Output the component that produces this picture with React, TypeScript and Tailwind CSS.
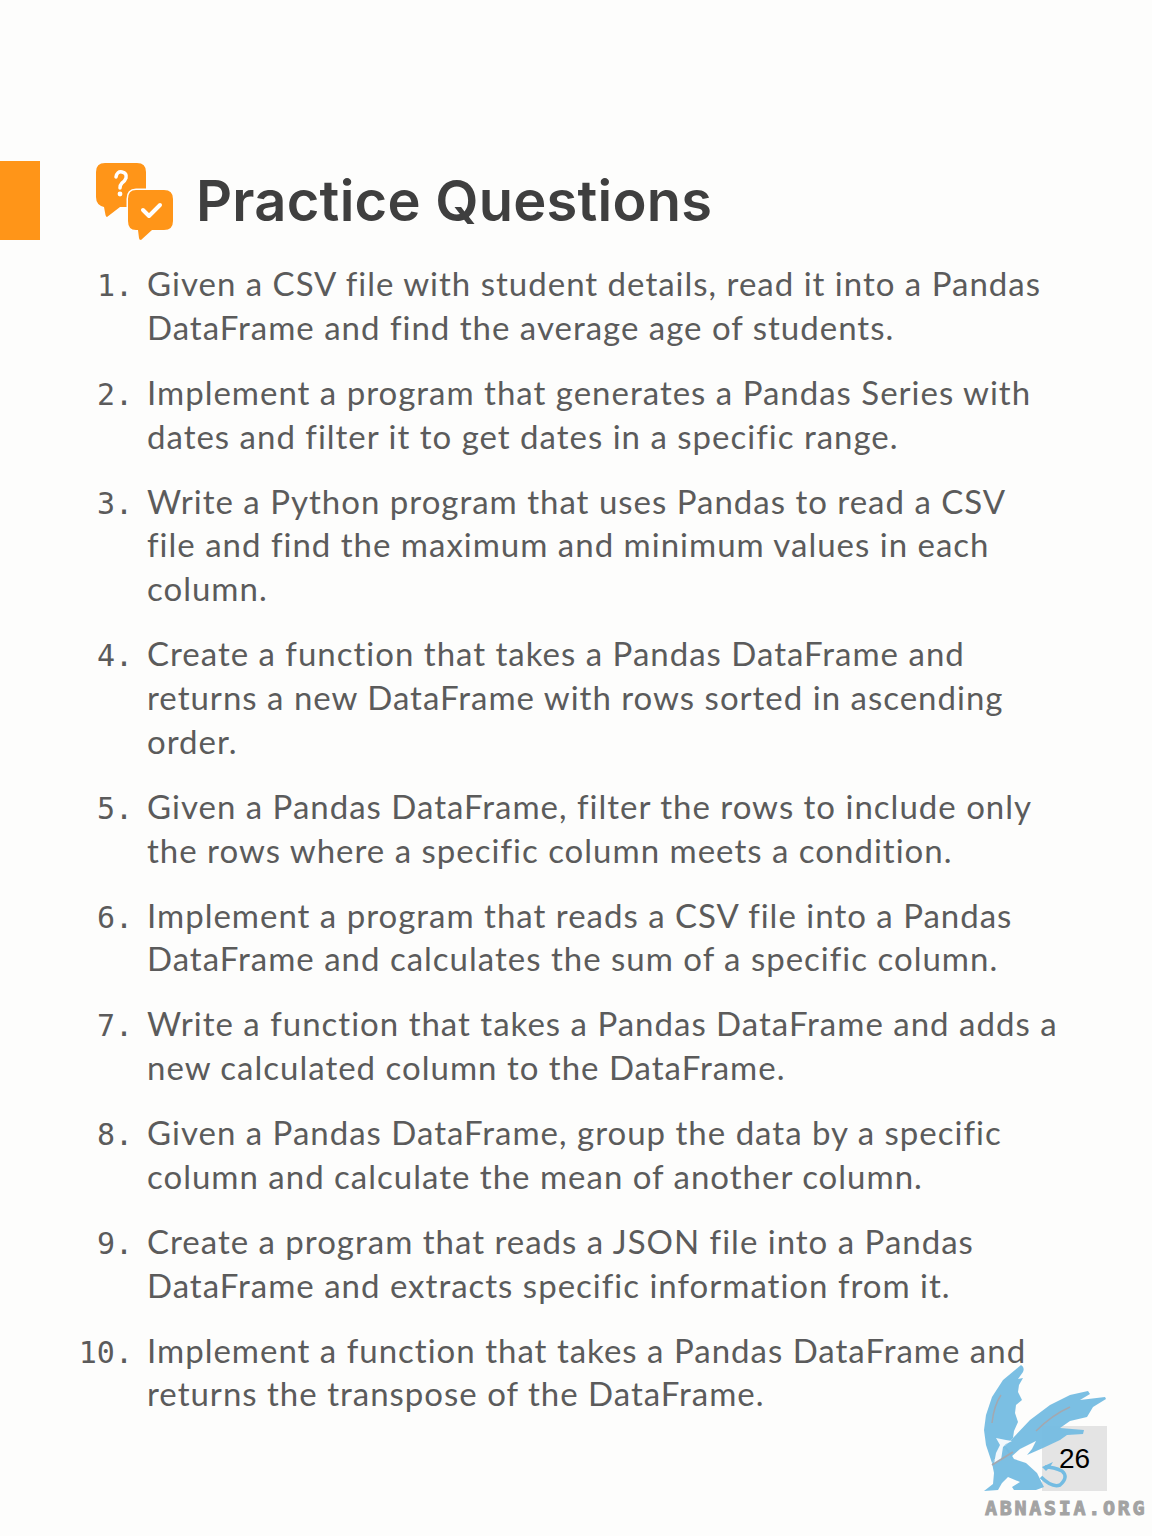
const items: [string, string[]][] = [
  ["1.", ["Given a CSV file with student details, read it into a Pandas", "DataFrame and find the average age of students."]],
  ["2.", ["Implement a program that generates a Pandas Series with", "dates and filter it to get dates in a specific range."]],
  ["3.", ["Write a Python program that uses Pandas to read a CSV", "file and find the maximum and minimum values in each", "column."]],
  ["4.", ["Create a function that takes a Pandas DataFrame and", "returns a new DataFrame with rows sorted in ascending", "order."]],
  ["5.", ["Given a Pandas DataFrame, filter the rows to include only", "the rows where a specific column meets a condition."]],
  ["6.", ["Implement a program that reads a CSV file into a Pandas", "DataFrame and calculates the sum of a specific column."]],
  ["7.", ["Write a function that takes a Pandas DataFrame and adds a", "new calculated column to the DataFrame."]],
  ["8.", ["Given a Pandas DataFrame, group the data by a specific", "column and calculate the mean of another column."]],
  ["9.", ["Create a program that reads a JSON file into a Pandas", "DataFrame and extracts specific information from it."]],
  ["10.", ["Implement a function that takes a Pandas DataFrame and", "returns the transpose of the DataFrame."]],
];

function ChatIcon() {
  return (
    <svg width="78" height="78" viewBox="0 0 78 78" className="shrink-0">
      <path d="M9 0H41Q50 0 50 9V36Q50 44 41 44H24L11 54Q10 54 9.500 52L8 44Q0 42 0 34V9Q0 0 9 0Z" fill="#ff9518" />
      <path d="M40 27H68Q77 27 77 36V58Q77 67 68 67H56L45 77Q43 77 43 75L42 67H40Q32 67 32 58V36Q32 27 40 27Z" fill="#ff9518" stroke="#fdfdfc" strokeWidth="3" paintOrder="stroke" />
      <path d="M20 14Q21 8 26 9Q31 10 30 15Q29 18 26 20Q24 22 24 25" fill="none" stroke="#fff" strokeWidth="3.500" strokeLinecap="round" />
      <circle cx="24" cy="31" r="2.400" fill="#fff" />
      <path d="M47 47L53 53L64 42" fill="none" stroke="#fff" strokeWidth="4" strokeLinecap="round" strokeLinejoin="round" />
    </svg>
  );
}

function Griffin() {
  return (
    <svg width="124" height="128" viewBox="0 0 124 128" className="absolute left-0 top-0">
      <g fill="#74bce2" fillOpacity="0.95">
        <path d="M37 0Q41 2 39 7L34 14L39 13L35 20L34 27L38 35L32 40L31 48L34 57L30 66L29 73L20 82L8 98L2 80L0 65L2 50L8 32L19 15Z" />
        <path d="M29 73L46 55L66 40L86 30L104 26L106 29L96 35L121 32L122 34L109 42L103 52L86 56L76 63L100 65L99 69L83 70L76 75L59 83L43 90L48 84L52 76L36 84L27 92L20 82Z" />
        <path d="M8 98L16 88L20 80L24 84L30 94L42 98L53 108L60 122L52 125L30 125L28 122L36 117L24 112L18 118L14 125L0 126L9 119L10 108Z" />
      </g>
      <path d="M12 73L22 75L28 76L22 79L19 82L17 95L10 99L12 88L16 80Z" fill="#f2f8fc" />
      <path d="M8 100L29 87" stroke="#a3a8b0" strokeWidth="2" fill="none" />
      <path d="M8 58Q10 40 17 30M52 66Q68 50 86 42" stroke="#a3a8b0" strokeWidth="1.500" fill="none" />
      <path d="M57 112Q68 123 76 120Q85 112 78 106Q70 102 61 102" stroke="#74bce2" strokeWidth="3.500" fill="none" />
      <path d="M58 102L69 97L66 102L62 106Z" fill="#74bce2" />
    </svg>
  );
}

export default function App() {
  return (
    <div className="relative min-h-[1536px] w-[1152px] overflow-hidden bg-[#fdfdfc] pt-[161px] text-[#5b5b5b] [font-family:'Lato',sans-serif]">
      <div className="flex h-[79px] items-start">
        <div className="h-[79px] w-10 bg-[#ff9518]" />
        <div className="ml-[56px] mt-[2px]"><ChatIcon /></div>
        <h1 className="ml-[22px] text-[56px] font-semibold leading-[80px] tracking-[0.25px] text-[#3f3f3f] [font-family:'Inter',sans-serif]">Practice Questions</h1>
      </div>
      <ol className="mt-[22px] flex flex-col gap-[21.2px]">
        {items.map(([n, lines]) => (
          <li key={n} className="flex items-baseline text-[33px] leading-[43.8px] tracking-[1px]">
            <span className="ml-[71px] w-[62px] text-right text-[30px] tracking-normal [font-family:'DejaVu_Sans_Mono',monospace]">{n}</span>
            <div className="ml-[14px] whitespace-nowrap">
              {lines.map((l) => <div key={l}>{l}</div>)}
            </div>
          </li>
        ))}
      </ol>
      <div className="absolute left-[984px] top-[1365px] h-[171px] w-[168px]">
        <div className="absolute left-[58px] top-[61px] h-[65px] w-[65px] bg-[#e4e4e4]" />
        <Griffin />
        <div className="absolute left-[58px] top-[61px] flex h-[65px] w-[65px] items-center justify-center text-[28px] text-black [font-family:'Liberation_Sans',sans-serif]">26</div>
        <div className="absolute left-[1px] top-[131px] whitespace-nowrap text-[20px] font-bold leading-[24px] tracking-[2.700px] text-[#a3a3a3] [-webkit-text-stroke:1px_#a3a3a3] [font-family:'DejaVu_Sans_Mono',monospace]">ABNASIA.ORG</div>
      </div>
    </div>
  );
}
